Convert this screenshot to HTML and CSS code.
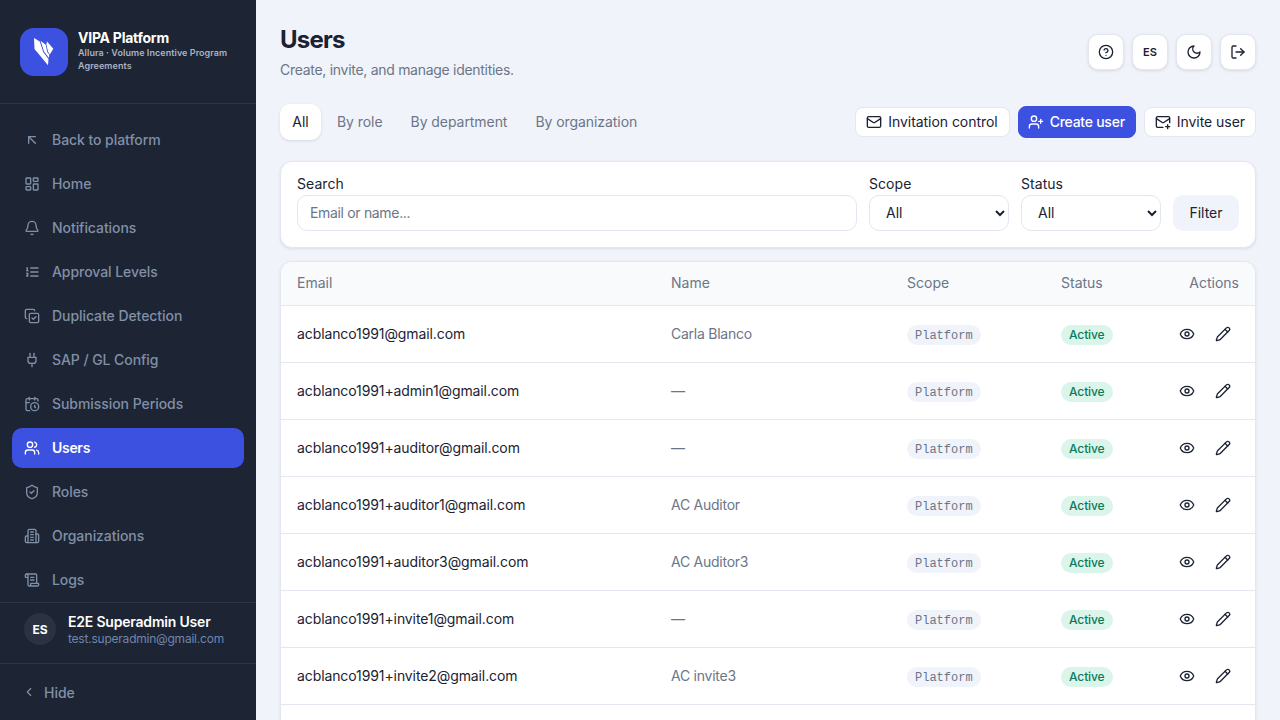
FILE: index.html
```html
<!DOCTYPE html>
<html lang="en">
<head>
  <meta charset="UTF-8" />
  <title>Users</title>
  <link rel="stylesheet" href="styles.css">
</head>
<body>

<svg class="icon-defs" xmlns="http://www.w3.org/2000/svg">
  <symbol id="i-back" viewBox="0 0 24 24"><path d="M7 17V7h10"/><path d="M17 17 7 7"/></symbol>
  <symbol id="i-home" viewBox="0 0 24 24"><rect x="3" y="3" width="7" height="9" rx="1"/><rect x="14" y="3" width="7" height="5" rx="1"/><rect x="14" y="12" width="7" height="9" rx="1"/><rect x="3" y="16" width="7" height="5" rx="1"/></symbol>
  <symbol id="i-bell" viewBox="0 0 24 24"><path d="M10.268 21a2 2 0 0 0 3.464 0"/><path d="M3.262 15.326A1 1 0 0 0 4 17h16a1 1 0 0 0 .74-1.673C19.41 13.956 18 12.499 18 8A6 6 0 0 0 6 8c0 4.499-1.411 5.956-2.738 7.326"/></symbol>
  <symbol id="i-list" viewBox="0 0 24 24"><path d="M10 12h11"/><path d="M10 18h11"/><path d="M10 6h11"/><path d="M4 10h2"/><path d="M4 6h1v4"/><path d="M6 18H4c0-1 2-2 2-3s-1-1.5-2-1"/></symbol>
  <symbol id="i-copy" viewBox="0 0 24 24"><path d="m12 15 2 2 4-4"/><rect x="8" y="8" width="14" height="14" rx="2"/><path d="M4 16c-1.1 0-2-.9-2-2V4c0-1.1.9-2 2-2h10c1.1 0 2 .9 2 2"/></symbol>
  <symbol id="i-plug" viewBox="0 0 24 24"><path d="M12 22v-5"/><path d="M9 8V2"/><path d="M15 8V2"/><path d="M18 8v5a4 4 0 0 1-4 4h-4a4 4 0 0 1-4-4V8Z"/></symbol>
  <symbol id="i-calendar" viewBox="0 0 24 24"><path d="M21 7.5V6a2 2 0 0 0-2-2H5a2 2 0 0 0-2 2v14a2 2 0 0 0 2 2h3.5"/><path d="M16 2v4"/><path d="M8 2v4"/><path d="M3 10h5"/><path d="M17.5 17.5 16 16.3V14"/><circle cx="16" cy="16" r="6"/></symbol>
  <symbol id="i-users" viewBox="0 0 24 24"><path d="M16 21v-2a4 4 0 0 0-4-4H6a4 4 0 0 0-4 4v2"/><circle cx="9" cy="7" r="4"/><path d="M22 21v-2a4 4 0 0 0-3-3.87"/><path d="M16 3.13a4 4 0 0 1 0 7.75"/></symbol>
  <symbol id="i-shield" viewBox="0 0 24 24"><path d="M20 13c0 5-3.5 7.5-7.66 8.95a1 1 0 0 1-.67-.01C7.5 20.5 4 18 4 13V6a1 1 0 0 1 1-1c2 0 4.5-1.2 6.24-2.72a1.17 1.17 0 0 1 1.52 0C14.51 3.81 17 5 19 5a1 1 0 0 1 1 1z"/><path d="m9 12 2 2 4-4"/></symbol>
  <symbol id="i-building" viewBox="0 0 24 24"><path d="M6 22V4a2 2 0 0 1 2-2h8a2 2 0 0 1 2 2v18Z"/><path d="M6 12H4a2 2 0 0 0-2 2v6a2 2 0 0 0 2 2h2"/><path d="M18 9h2a2 2 0 0 1 2 2v9a2 2 0 0 1-2 2h-2"/><path d="M10 6h4"/><path d="M10 10h4"/><path d="M10 14h4"/><path d="M10 18h4"/></symbol>
  <symbol id="i-scroll" viewBox="0 0 24 24"><path d="M15 12h-5"/><path d="M15 8h-5"/><path d="M19 17V5a2 2 0 0 0-2-2H4"/><path d="M8 21h12a2 2 0 0 0 2-2v-1a1 1 0 0 0-1-1H11a1 1 0 0 0-1 1v1a2 2 0 1 1-4 0V5a2 2 0 1 0-4 0v2a1 1 0 0 0 1 1h3"/></symbol>
  <symbol id="i-chevron" viewBox="0 0 24 24"><path d="m15 18-6-6 6-6"/></symbol>
  <symbol id="i-help" viewBox="0 0 24 24"><circle cx="12" cy="12" r="10"/><path d="M9.09 9a3 3 0 0 1 5.83 1c0 2-3 3-3 3"/><path d="M12 17h.01"/></symbol>
  <symbol id="i-moon" viewBox="0 0 24 24"><path d="M12 3a6 6 0 0 0 9 9 9 9 0 1 1-9-9Z"/></symbol>
  <symbol id="i-logout" viewBox="0 0 24 24"><path d="m16 17 5-5-5-5"/><path d="M21 12H9"/><path d="M9 21H5a2 2 0 0 1-2-2V5a2 2 0 0 1 2-2h4"/></symbol>
  <symbol id="i-mail" viewBox="0 0 24 24"><rect x="2" y="4" width="20" height="16" rx="2"/><path d="m22 7-8.97 5.7a1.94 1.94 0 0 1-2.06 0L2 7"/></symbol>
  <symbol id="i-userplus" viewBox="0 0 24 24"><path d="M16 21v-2a4 4 0 0 0-4-4H6a4 4 0 0 0-4 4v2"/><circle cx="9" cy="7" r="4"/><path d="M19 8v6"/><path d="M22 11h-6"/></symbol>
  <symbol id="i-mailplus" viewBox="0 0 24 24"><path d="M22 13V6a2 2 0 0 0-2-2H4a2 2 0 0 0-2 2v12c0 1.1.9 2 2 2h8"/><path d="m22 7-8.97 5.7a1.94 1.94 0 0 1-2.06 0L2 7"/><path d="M19 16v6"/><path d="M16 19h6"/></symbol>
  <symbol id="i-eye" viewBox="0 0 24 24"><path d="M2.062 12.348a1 1 0 0 1 0-.696 10.75 10.75 0 0 1 19.876 0 1 1 0 0 1 0 .696 10.75 10.75 0 0 1-19.876 0"/><circle cx="12" cy="12" r="3"/></symbol>
  <symbol id="i-pencil" viewBox="0 0 24 24"><path d="M21.174 6.812a1 1 0 0 0-3.986-3.987L3.842 16.174a2 2 0 0 0-.5.83l-1.321 4.352a.5.5 0 0 0 .623.622l4.353-1.32a2 2 0 0 0 .83-.497z"/><path d="m15 5 4 4"/></symbol>
</svg>

<div class="layout">

  <aside class="sidebar">
    <div class="brand">
      <div class="brand-logo">
        <svg viewBox="0 0 48 48" width="48" height="48"><polygon points="14,10 19.8,13.4 23.2,24 28.5,31 28,37.3 14.5,21"/><polygon points="20.6,12.8 25.7,16.7 27.2,24 29.2,26.6 29,30 24,23.5"/><polygon points="27,13.5 33.3,20.7 29.8,26.4 28,23.5 26.4,16.5"/></svg>
      </div>
      <div class="brand-text">
        <div class="brand-name">VIPA Platform</div>
        <div class="brand-sub">Allura · Volume Incentive Program Agreements</div>
      </div>
    </div>

    <nav class="side-nav">
      <a href="#" class="side-link"><svg class="icon"><use href="#i-back"/></svg><span>Back to platform</span></a>
      <a href="#" class="side-link"><svg class="icon"><use href="#i-home"/></svg><span>Home</span></a>
      <a href="#" class="side-link"><svg class="icon"><use href="#i-bell"/></svg><span>Notifications</span></a>
      <a href="#" class="side-link"><svg class="icon"><use href="#i-list"/></svg><span>Approval Levels</span></a>
      <a href="#" class="side-link"><svg class="icon"><use href="#i-copy"/></svg><span>Duplicate Detection</span></a>
      <a href="#" class="side-link"><svg class="icon"><use href="#i-plug"/></svg><span>SAP / GL Config</span></a>
      <a href="#" class="side-link"><svg class="icon"><use href="#i-calendar"/></svg><span>Submission Periods</span></a>
      <a href="#" class="side-link active"><svg class="icon"><use href="#i-users"/></svg><span>Users</span></a>
      <a href="#" class="side-link"><svg class="icon"><use href="#i-shield"/></svg><span>Roles</span></a>
      <a href="#" class="side-link"><svg class="icon"><use href="#i-building"/></svg><span>Organizations</span></a>
      <a href="#" class="side-link"><svg class="icon"><use href="#i-scroll"/></svg><span>Logs</span></a>
    </nav>

    <div class="side-user">
      <div class="avatar">ES</div>
      <div>
        <div class="user-name">E2E Superadmin User</div>
        <div class="user-mail">test.superadmin@gmail.com</div>
      </div>
    </div>

    <div class="side-hide"><svg class="icon-sm"><use href="#i-chevron"/></svg>Hide</div>
  </aside>

  <main class="content">
    <header class="page-head">
      <div>
        <h1>Users</h1>
        <p class="subtitle">Create, invite, and manage identities.</p>
      </div>
      <div class="head-tools">
        <button class="tool-btn"><svg class="icon"><use href="#i-help"/></svg></button>
        <button class="tool-btn tool-text">ES</button>
        <button class="tool-btn"><svg class="icon"><use href="#i-moon"/></svg></button>
        <button class="tool-btn"><svg class="icon"><use href="#i-logout"/></svg></button>
      </div>
    </header>

    <div class="toolbar">
      <div class="tabs">
        <a href="#" class="tab active">All</a>
        <a href="#" class="tab">By role</a>
        <a href="#" class="tab">By department</a>
        <a href="#" class="tab">By organization</a>
      </div>
      <div class="actions">
        <button class="btn btn-control"><svg class="icon"><use href="#i-mail"/></svg><span>Invitation control</span></button>
        <button class="btn btn-primary"><svg class="icon"><use href="#i-userplus"/></svg><span>Create user</span></button>
        <button class="btn"><svg class="icon"><use href="#i-mailplus"/></svg><span>Invite user</span></button>
      </div>
    </div>

    <form class="card filters">
      <label class="field field-search">Search
        <input type="text" placeholder="Email or name..." />
      </label>
      <label class="field field-select">Scope
        <select><option>All</option></select>
      </label>
      <label class="field field-select">Status
        <select><option>All</option></select>
      </label>
      <button type="button" class="btn-filter">Filter</button>
    </form>

    <div class="card table-card">
      <table>
        <thead>
          <tr>
            <th class="col-email">Email</th>
            <th class="col-name">Name</th>
            <th class="col-scope">Scope</th>
            <th class="col-status">Status</th>
            <th class="col-actions">Actions</th>
          </tr>
        </thead>
        <tbody id="usersBody">
          <tr>
            <td class="cell-email">acblanco1991@gmail.com</td>
            <td class="cell-name">Carla Blanco</td>
            <td class="cell-pill"><span class="tag">Platform</span></td>
            <td class="cell-pill"><span class="badge">Active</span></td>
            <td><div class="row-actions"><button class="icon-btn"><svg class="icon"><use href="#i-eye"/></svg></button><button class="icon-btn"><svg class="icon"><use href="#i-pencil"/></svg></button></div></td>
          </tr>
          <tr>
            <td class="cell-email">acblanco1991+admin1@gmail.com</td>
            <td class="cell-name">—</td>
            <td class="cell-pill"><span class="tag">Platform</span></td>
            <td class="cell-pill"><span class="badge">Active</span></td>
            <td><div class="row-actions"><button class="icon-btn"><svg class="icon"><use href="#i-eye"/></svg></button><button class="icon-btn"><svg class="icon"><use href="#i-pencil"/></svg></button></div></td>
          </tr>
          <tr>
            <td class="cell-email">acblanco1991+auditor@gmail.com</td>
            <td class="cell-name">—</td>
            <td class="cell-pill"><span class="tag">Platform</span></td>
            <td class="cell-pill"><span class="badge">Active</span></td>
            <td><div class="row-actions"><button class="icon-btn"><svg class="icon"><use href="#i-eye"/></svg></button><button class="icon-btn"><svg class="icon"><use href="#i-pencil"/></svg></button></div></td>
          </tr>
          <tr>
            <td class="cell-email">acblanco1991+auditor1@gmail.com</td>
            <td class="cell-name">AC Auditor</td>
            <td class="cell-pill"><span class="tag">Platform</span></td>
            <td class="cell-pill"><span class="badge">Active</span></td>
            <td><div class="row-actions"><button class="icon-btn"><svg class="icon"><use href="#i-eye"/></svg></button><button class="icon-btn"><svg class="icon"><use href="#i-pencil"/></svg></button></div></td>
          </tr>
          <tr>
            <td class="cell-email">acblanco1991+auditor3@gmail.com</td>
            <td class="cell-name">AC Auditor3</td>
            <td class="cell-pill"><span class="tag">Platform</span></td>
            <td class="cell-pill"><span class="badge">Active</span></td>
            <td><div class="row-actions"><button class="icon-btn"><svg class="icon"><use href="#i-eye"/></svg></button><button class="icon-btn"><svg class="icon"><use href="#i-pencil"/></svg></button></div></td>
          </tr>
          <tr>
            <td class="cell-email">acblanco1991+invite1@gmail.com</td>
            <td class="cell-name">—</td>
            <td class="cell-pill"><span class="tag">Platform</span></td>
            <td class="cell-pill"><span class="badge">Active</span></td>
            <td><div class="row-actions"><button class="icon-btn"><svg class="icon"><use href="#i-eye"/></svg></button><button class="icon-btn"><svg class="icon"><use href="#i-pencil"/></svg></button></div></td>
          </tr>
          <tr>
            <td class="cell-email">acblanco1991+invite2@gmail.com</td>
            <td class="cell-name">AC invite3</td>
            <td class="cell-pill"><span class="tag">Platform</span></td>
            <td class="cell-pill"><span class="badge">Active</span></td>
            <td><div class="row-actions"><button class="icon-btn"><svg class="icon"><use href="#i-eye"/></svg></button><button class="icon-btn"><svg class="icon"><use href="#i-pencil"/></svg></button></div></td>
          </tr>
          <tr>
            <td class="cell-email">&nbsp;</td>
            <td></td>
            <td></td>
            <td></td>
            <td></td>
          </tr>
        </tbody>
      </table>
    </div>
  </main>

</div>

</body>
</html>
```

FILE: styles.css
```css
* {
  box-sizing: border-box;
}

body {
  font-family: Inter, "Noto Sans", sans-serif;
  background-color: #f0f3f9;
  color: #1a2233;
  margin: 0;
  padding: 0;
  height: 720px;
  overflow: hidden;
}

.icon-defs {
  position: absolute;
  width: 0;
  height: 0;
}

.icon,
.icon-sm {
  width: 16px;
  height: 16px;
  fill: none;
  stroke: currentColor;
  stroke-width: 2;
  stroke-linecap: round;
  stroke-linejoin: round;
  flex-shrink: 0;
}

.layout {
  display: flex;
  height: 720px;
}

/* sidebar */
.sidebar {
  width: 256px;
  flex-shrink: 0;
  background-color: #1d2433;
  display: flex;
  flex-direction: column;
}

.brand {
  display: flex;
  align-items: center;
  gap: 10px;
  height: 104px;
  padding: 0 20px;
  border-bottom: 1px solid #2d3444;
}

.brand-logo {
  width: 48px;
  height: 48px;
  border-radius: 14px;
  background-color: #3d51e0;
  flex-shrink: 0;
}

.brand-logo svg {
  display: block;
  fill: #fff;
}

.brand-text {
  padding-bottom: 2px;
}

.brand-name {
  color: #fff;
  font-size: 14px;
  font-weight: 700;
  line-height: 17px;
  letter-spacing: -0.25px;
}

.brand-sub {
  color: #aab3c3;
  font-size: 9px;
  font-weight: 600;
  line-height: 13px;
  letter-spacing: 0.06px;
}

.side-nav {
  flex: 1;
  padding: 16px 12px 0;
  display: flex;
  flex-direction: column;
  gap: 4px;
  overflow: hidden;
}

.side-link {
  display: flex;
  align-items: center;
  gap: 12px;
  height: 40px;
  flex-shrink: 0;
  padding: 0 12px;
  border-radius: 10px;
  color: #8090a8;
  font-size: 14px;
  font-weight: 500;
  letter-spacing: -0.06px;
  text-decoration: none;
}

.side-link span {
  margin-bottom: 2px;
}

.side-link.active {
  background-color: #3d51e0;
  color: #fff;
  font-weight: 600;
  letter-spacing: -0.3px;
}

.side-user {
  display: flex;
  align-items: flex-start;
  gap: 12px;
  height: 61px;
  padding: 10px 24px 0;
  border-top: 1px solid #2d3444;
}

.avatar {
  width: 32px;
  height: 32px;
  border-radius: 50%;
  background-color: #2b3242;
  color: #fff;
  font-size: 12px;
  font-weight: 700;
  display: flex;
  align-items: center;
  justify-content: center;
  flex-shrink: 0;
}

.user-name {
  color: #fff;
  font-size: 14px;
  font-weight: 600;
  line-height: 18px;
  letter-spacing: -0.2px;
}

.user-mail {
  color: #6f86ad;
  font-size: 12px;
  line-height: 16px;
  letter-spacing: -0.22px;
}

.side-hide {
  display: flex;
  align-items: center;
  gap: 8px;
  height: 57px;
  padding: 0 22px;
  border-top: 1px solid #2d3444;
  color: #8090a8;
  font-size: 14px;
  font-weight: 500;
}

.icon-sm {
  width: 14px;
  height: 14px;
}

/* main */
.content {
  flex: 1;
  min-width: 0;
  padding: 24px;
  overflow: hidden;
}

.page-head {
  display: flex;
  justify-content: space-between;
  align-items: flex-start;
  height: 80px;
}

h1 {
  margin: 0;
  font-size: 24px;
  font-weight: 700;
  line-height: 32px;
  letter-spacing: -0.8px;
  color: #1a2233;
}

.subtitle {
  margin: 4px 0 0;
  font-size: 14px;
  line-height: 20px;
  letter-spacing: -0.29px;
  color: #6b7688;
}

.head-tools {
  display: flex;
  gap: 8px;
  margin-top: 10px;
}

.tool-btn {
  width: 36px;
  height: 36px;
  border: 1px solid #e2e7f0;
  border-radius: 10px;
  background-color: #fff;
  color: #1a2233;
  box-shadow: 0 1px 3px rgba(26, 34, 51, 0.12);
  display: flex;
  align-items: center;
  justify-content: center;
  padding: 0;
}

.tool-text {
  font-family: inherit;
  font-size: 11px;
  font-weight: 600;
}

.toolbar {
  display: flex;
  justify-content: space-between;
  align-items: center;
  height: 36px;
  margin-bottom: 21px;
}

.tabs {
  display: flex;
  gap: 4px;
}

.tab {
  height: 36px;
  padding: 0 12px 2px;
  border-radius: 10px;
  display: flex;
  align-items: center;
  font-size: 14px;
  font-weight: 400;
  letter-spacing: -0.06px;
  color: #6b7688;
  text-decoration: none;
}

.tab.active {
  width: 41px;
  justify-content: center;
  background-color: #fff;
  color: #1a2233;
  box-shadow: 0 1px 3px rgba(26, 34, 51, 0.12);
}

.actions {
  display: flex;
  align-items: center;
  gap: 8px;
}

.btn {
  height: 30px;
  padding: 0 10px;
  border: 1px solid #e2e7f0;
  border-radius: 8px;
  background-color: #fff;
  color: #1a2233;
  font-family: inherit;
  font-size: 14px;
  font-weight: 400;
  letter-spacing: -0.05px;
  display: flex;
  align-items: center;
  gap: 6px;
}

.btn span {
  margin-bottom: 2px;
}

.btn-control {
  padding: 0 11px 0 10px;
}

.btn-primary {
  height: 32px;
  padding: 0 10px 0 9px;
  background-color: #3d51e0;
  border-color: #3d51e0;
  color: #fff;
  font-weight: 500;
  letter-spacing: -0.25px;
}

.card {
  background-color: #fff;
  border: 1px solid #e2e7f0;
  border-radius: 12px;
  box-shadow: 0 1px 3px rgba(26, 34, 51, 0.1);
}

.filters {
  display: flex;
  align-items: flex-end;
  gap: 12px;
  height: 87px;
  padding: 0 16px 16px;
  margin-bottom: 13px;
}

.field {
  display: flex;
  flex-direction: column;
  gap: 1px;
  font-size: 14px;
  font-weight: 400;
  line-height: 20px;
  letter-spacing: 0.05px;
  color: #1a2233;
}

.field-search {
  flex: 1;
}

.field-select {
  width: 140px;
}

.field input,
.field select {
  height: 36px;
  border: 1px solid #e2e7f0;
  border-radius: 10px;
  background-color: #fff;
  font-family: inherit;
  font-size: 14px;
  color: #1a2233;
  padding: 0 12px 2px;
}

.field input {
  letter-spacing: -0.33px;
}

.field input::placeholder {
  color: #6b7688;
}

.btn-filter {
  height: 36px;
  width: 66px;
  padding: 0 0 2px;
  border: none;
  border-radius: 10px;
  background-color: #f0f3f9;
  color: #1a2233;
  font-family: inherit;
  font-size: 14px;
  font-weight: 400;
}

/* table */
.table-card {
  overflow: hidden;
}

table {
  width: 100%;
  border-collapse: collapse;
  table-layout: fixed;
}

th,
td {
  padding: 0 16px;
  text-align: left;
  font-size: 14px;
  border-bottom: 1px solid #e2e7f0;
}

th {
  height: 43px;
  padding-bottom: 2px;
  background-color: #f8fafc;
  color: #6b7688;
  font-weight: 400;
}

td {
  height: 57px;
}

.col-email { width: 374px; }
.col-name { width: 236px; }
.col-scope { width: 154px; }
.col-status { width: 100px; }

.col-actions {
  text-align: right;
}

.cell-email {
  font-weight: 400;
  letter-spacing: -0.1px;
  color: #1a2233;
}

.cell-name {
  letter-spacing: -0.25px;
  color: #6b7688;
}

.cell-pill {
  padding-top: 2px;
}

.tag {
  display: inline-block;
  vertical-align: top;
  padding: 0 8px;
  height: 20px;
  line-height: 22px;
  border-radius: 10px;
  background-color: #f0f3f9;
  color: #6b7688;
  font-family: "Liberation Mono", monospace;
  font-size: 12px;
}

.badge {
  display: inline-block;
  vertical-align: top;
  padding: 0 8px;
  height: 20px;
  line-height: 20px;
  border-radius: 10px;
  background-color: #dbf5ea;
  color: #0a7a5a;
  font-size: 12px;
  font-weight: 500;
  letter-spacing: -0.1px;
}

.row-actions {
  display: flex;
  justify-content: flex-end;
  gap: 4px;
}

.icon-btn {
  width: 32px;
  height: 32px;
  padding: 0;
  border: none;
  background: none;
  color: #1a2233;
  display: flex;
  align-items: center;
  justify-content: center;
}
```
